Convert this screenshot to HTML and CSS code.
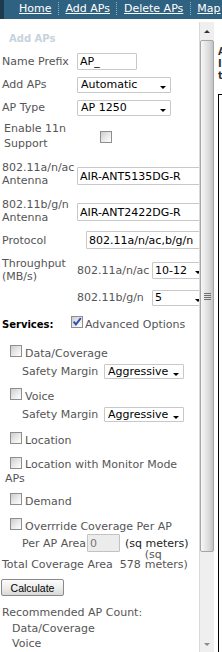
FILE: index.html
```html
<!DOCTYPE html>
<html lang="en">
<head>
<meta charset="utf-8">
<title>Add APs</title>
<link rel="stylesheet" href="styles.css">
</head>
<body>
<nav class="nav">
  <span class="nav-edge"></span>
  <a class="nav-link nav-first" href="#">Home</a>
  <span class="nav-sep"></span>
  <a class="nav-link" href="#">Add APs</a>
  <span class="nav-sep"></span>
  <a class="nav-link" href="#">Delete APs</a>
  <span class="nav-sep"></span>
  <a class="nav-link" href="#">Map</a>
</nav>
<div class="main">
  <form class="panel">
    <div class="title">Add APs</div>
    <div class="field"><span class="lbl">Name Prefix</span><input class="text prefix" type="text" value="AP_"></div>
    <div class="field"><span class="lbl">Add APs</span><span class="sel sel-wide"><select><option>Automatic</option></select></span></div>
    <div class="field"><span class="lbl">AP Type</span><span class="sel sel-wide"><select><option>AP 1250</option></select></span></div>
    <div class="field field-11n"><span class="lbl lbl-11n">Enable 11n Support</span><span class="cb cb-11n"></span></div>
    <div class="field field-ant1"><span class="lbl lbl-2l">802.11a/n/ac Antenna</span><input class="text antenna ant1" type="text" value="AIR-ANT5135DG-R"></div>
    <div class="field field-ant2"><span class="lbl lbl-2l">802.11b/g/n Antenna</span><input class="text antenna ant2" type="text" value="AIR-ANT2422DG-R"></div>
    <div class="field field-proto"><span class="lbl lbl-proto">Protocol</span><input class="text proto" type="text" value="802.11a/n/ac,b/g/n"></div>
    <div class="field field-tp"><span class="lbl lbl-2l">Throughput (MB/s)</span><span class="sublbl">802.11a/n/ac</span><span class="sel sel-tp"><select><option>10-12</option></select></span></div>
    <div class="field field-tp2"><span class="lbl"></span><span class="sublbl">802.11b/g/n</span><span class="sel sel-tp sel-tp2"><select><option>5</option></select></span></div>
    <div class="services"><span class="svc-lbl">Services:</span><span class="cb cb-adv"><svg width="10" height="10" viewBox="0 0 10 10"><polyline points="1.6,4.6 3.9,7.4 8.8,1.2" fill="none" stroke="#2b4fb4" stroke-width="1.9"/></svg></span><span class="svc-text">Advanced Options</span></div>
    <div class="check check-data"><span class="cb"></span><span class="check-text">Data/Coverage</span></div>
    <div class="sub"><span class="sub-lbl">Safety Margin</span><span class="sel sel-margin"><select><option>Aggressive</option></select></span></div>
    <div class="check check-voice"><span class="cb"></span><span class="check-text">Voice</span></div>
    <div class="sub"><span class="sub-lbl">Safety Margin</span><span class="sel sel-margin"><select><option>Aggressive</option></select></span></div>
    <div class="check check-loc"><span class="cb"></span><span class="check-text">Location</span></div>
    <p class="check-wrap"><span class="cb"></span>Location with Monitor Mode APs</p>
    <div class="check check-demand"><span class="cb"></span><span class="check-text">Demand</span></div>
    <div class="check check-override"><span class="cb"></span><span class="check-text">Overrride Coverage Per AP</span></div>
    <div class="sub perap"><span class="sub-lbl perap-lbl">Per AP Area</span><input class="text area" type="text" value="0" readonly><span class="units">(sq meters)</span></div>
    <div class="total"><span>Total Coverage Area</span><span class="total-val">578</span><span class="total-units">(sq<br>meters)</span></div>
    <div class="actions"><button type="button" class="btn">Calculate</button></div>
    <div class="result-head">Recommended AP Count:</div>
    <div class="result result-first">Data/Coverage</div>
    <div class="result">Voice</div>
  </form>
  <div class="scrollbar" aria-hidden="true">
    <div class="sb-btn sb-up"><span class="sb-arrow-up"></span></div>
    <div class="sb-track"><div class="sb-thumb"><span class="sb-grip"></span></div></div>
    <div class="sb-btn sb-down"><span class="sb-arrow-down"></span></div>
  </div>
  <div class="side">
    <div class="side-text">A<br>I<br>t</div>
    <div class="side-box"></div>
  </div>
</div>
</body>
</html>
```
FILE: styles.css
```css
* { box-sizing: border-box; }
html, body { margin: 0; padding: 0; }
body {
  width: 222px;
  height: 652px;
  overflow: hidden;
  background: #fff;
  font-family: "DejaVu Sans", Verdana, sans-serif;
  font-size: 11px;
  color: #555;
}

/* top navigation */
.nav { display: flex; height: 19px; background: #2f6280; }
.nav-edge { flex: none; width: 4px; background: #1c3c4e; }
.nav-link { flex: none; color: #fff; text-decoration: underline; line-height: 18px; white-space: nowrap; }
.nav-first { margin-left: 15px; }
.nav-sep { flex: none; width: 0; height: 13px; margin: 2px 6.5px 0; border-left: 1px dotted #8fb1c6; }

.main { display: flex; height: 633px; }

/* left form panel */
.panel { flex: none; width: 199px; margin: 0; padding: 0 4px 0 2px; overflow: hidden; }
.title { height: 31px; padding: 13px 0 0 7px; line-height: 13px; font-size: 10px; font-weight: bold; color: #c6d3dc; }

.field { display: flex; align-items: center; height: 23px; }
.lbl { flex: none; width: 75px; line-height: 13px; }
.lbl-11n { padding-left: 2px; line-height: 15px; margin-bottom: 2px; }
.lbl-proto { width: 84px; }
.field-11n { height: 36px; }
.field-ant1 { height: 38px; }
.field-ant2 { height: 36px; }
.field-proto { height: 22px; }
.field-tp { height: 38px; }
.field-tp2 { height: 17px; }
.sublbl { flex: none; width: 75px; line-height: 13px; }

.text {
  display: block;
  flex: none;
  margin: 0;
  height: 18px;
  padding: 0 2px;
  border: 1px solid #c8c8c8;
  border-radius: 1px;
  background: #fff;
  color: #000;
  font: 11px "DejaVu Sans", Verdana, sans-serif;
  outline: none;
}
.prefix { width: 60px; height: 17px; }
.antenna { width: 130px; }
.ant1 { margin-top: 4px; }
.ant2 { margin-top: 2px; }
.proto { width: 120px; }
.area { width: 33px; background: #ececec; color: #777; border-color: #c2c2c2; }

.sel { position: relative; display: block; flex: none; }
.sel select {
  -webkit-appearance: none;
  appearance: none;
  display: block;
  width: 100%;
  height: 100%;
  margin: 0;
  padding: 0 12px 0 3px;
  border: 1px solid #c8c8c8;
  border-radius: 1px;
  background: #fff;
  color: #000;
  font: 11px "DejaVu Sans", Verdana, sans-serif;
  line-height: 13px;
  outline: none;
}
.sel::after {
  content: "";
  position: absolute;
  right: 5px;
  top: 50%;
  margin-top: 1px;
  border-left: 3.5px solid transparent;
  border-right: 3.5px solid transparent;
  border-top: 3.5px solid #000;
  pointer-events: none;
}
.sel-wide { width: 94px; height: 16px; }
.sel-tp { width: 54px; height: 17px; }
.sel-tp select { padding-left: 2px; }
.sel-tp2 { height: 16px; }
.sel-margin { width: 80px; height: 15px; }

/* checkboxes */
.cb {
  display: block;
  flex: none;
  width: 12px;
  height: 12px;
  border: 1px solid #8e8e8e;
  background: linear-gradient(135deg, #cdcdcd 0%, #ebebeb 55%, #fff 100%);
}
.cb svg { display: block; }
.cb-11n { margin-left: 23px; }

.services { display: flex; align-items: center; height: 22px; margin-top: 7px; }
.svc-lbl { flex: none; width: 69px; font-size: 10px; font-weight: bold; color: #000; }
.cb-adv { margin-bottom: 4px; }
.svc-text { margin-left: 2px; }

.check { display: flex; align-items: center; height: 22px; padding-left: 8px; }
.check .cb { margin-bottom: 5px; }
.check-text { margin-left: 3px; white-space: nowrap; }
.check-data { margin-top: 7px; }
.check-voice { margin-top: 6px; }
.check-loc { margin-top: 7px; }
.check-demand { margin-top: 5px; }
.check-override { margin-top: 6px; height: 16px; }

.check-wrap { margin: 6px 0 0; height: 28px; padding-left: 3px; line-height: 14px; }
.check-wrap .cb { display: inline-block; vertical-align: -1px; margin: 0 3px 0 5px; }

.sub { display: flex; align-items: center; height: 15px; padding-left: 20px; }
.sub-lbl { flex: none; width: 82px; white-space: nowrap; }
.perap { height: 18px; }
.perap-lbl { width: 65px; }
.units { margin-left: 5px; color: #222; white-space: nowrap; }

.total { display: flex; align-items: flex-end; height: 20px; margin-top: -2px; line-height: 10px; white-space: nowrap; }
.total-val { margin-left: 7px; }
.total-units { margin-left: 4px; }

.actions { margin-top: 9px; }
.btn {
  display: block;
  width: 63px;
  height: 17px;
  margin: 0 0 0 -1px;
  padding: 0;
  border: 1px solid #8a8a8a;
  border-radius: 2px;
  background: linear-gradient(#fcfcfc, #ececec 55%, #d8d8d8);
  color: #000;
  font: 10.5px "Liberation Sans", Arial, sans-serif;
}

.result-head { margin-top: 9px; line-height: 15px; }
.result { padding-left: 10px; line-height: 15px; }
.result-first { margin-top: 1px; }

/* scrollbar of the form panel */
.scrollbar {
  flex: none;
  width: 15px;
  height: 630px;
  margin-top: 3px;
  display: flex;
  flex-direction: column;
  background: #efefef;
  border-left: 1px solid #d9d9d9;
}
.sb-btn { flex: none; display: flex; align-items: center; justify-content: center; }
.sb-up { height: 18px; }
.sb-down { height: 16px; }
.sb-track { flex: 1; display: flex; flex-direction: column; }
.sb-thumb {
  flex: none;
  height: 512px;
  border: 1px solid #a6a6a6;
  border-radius: 2px;
  background: linear-gradient(to right, #f8f8f8, #e8e8e8 35%, #d8d8d8 70%, #c2c2c2);
  display: flex;
  align-items: center;
  justify-content: center;
}
.sb-grip { width: 7px; height: 7px; background: repeating-linear-gradient(to bottom, #6f6f6f 0 1px, transparent 1px 2px); }
.sb-arrow-up { width: 0; height: 0; border-left: 3px solid transparent; border-right: 3px solid transparent; border-bottom: 3px solid #333; }
.sb-arrow-down { width: 0; height: 0; border-left: 3px solid transparent; border-right: 3px solid transparent; border-top: 3px solid #8a8a8a; }

/* right pane, mostly out of view */
.side { flex: 1; min-width: 0; padding: 27px 0 0 4px; overflow: hidden; }
.side-text { font-size: 10px; font-weight: bold; line-height: 12px; color: #333; white-space: nowrap; }
.side-box { margin-top: 12px; height: 600px; border-top: 1px solid #000; border-left: 1px solid #000; }
```
